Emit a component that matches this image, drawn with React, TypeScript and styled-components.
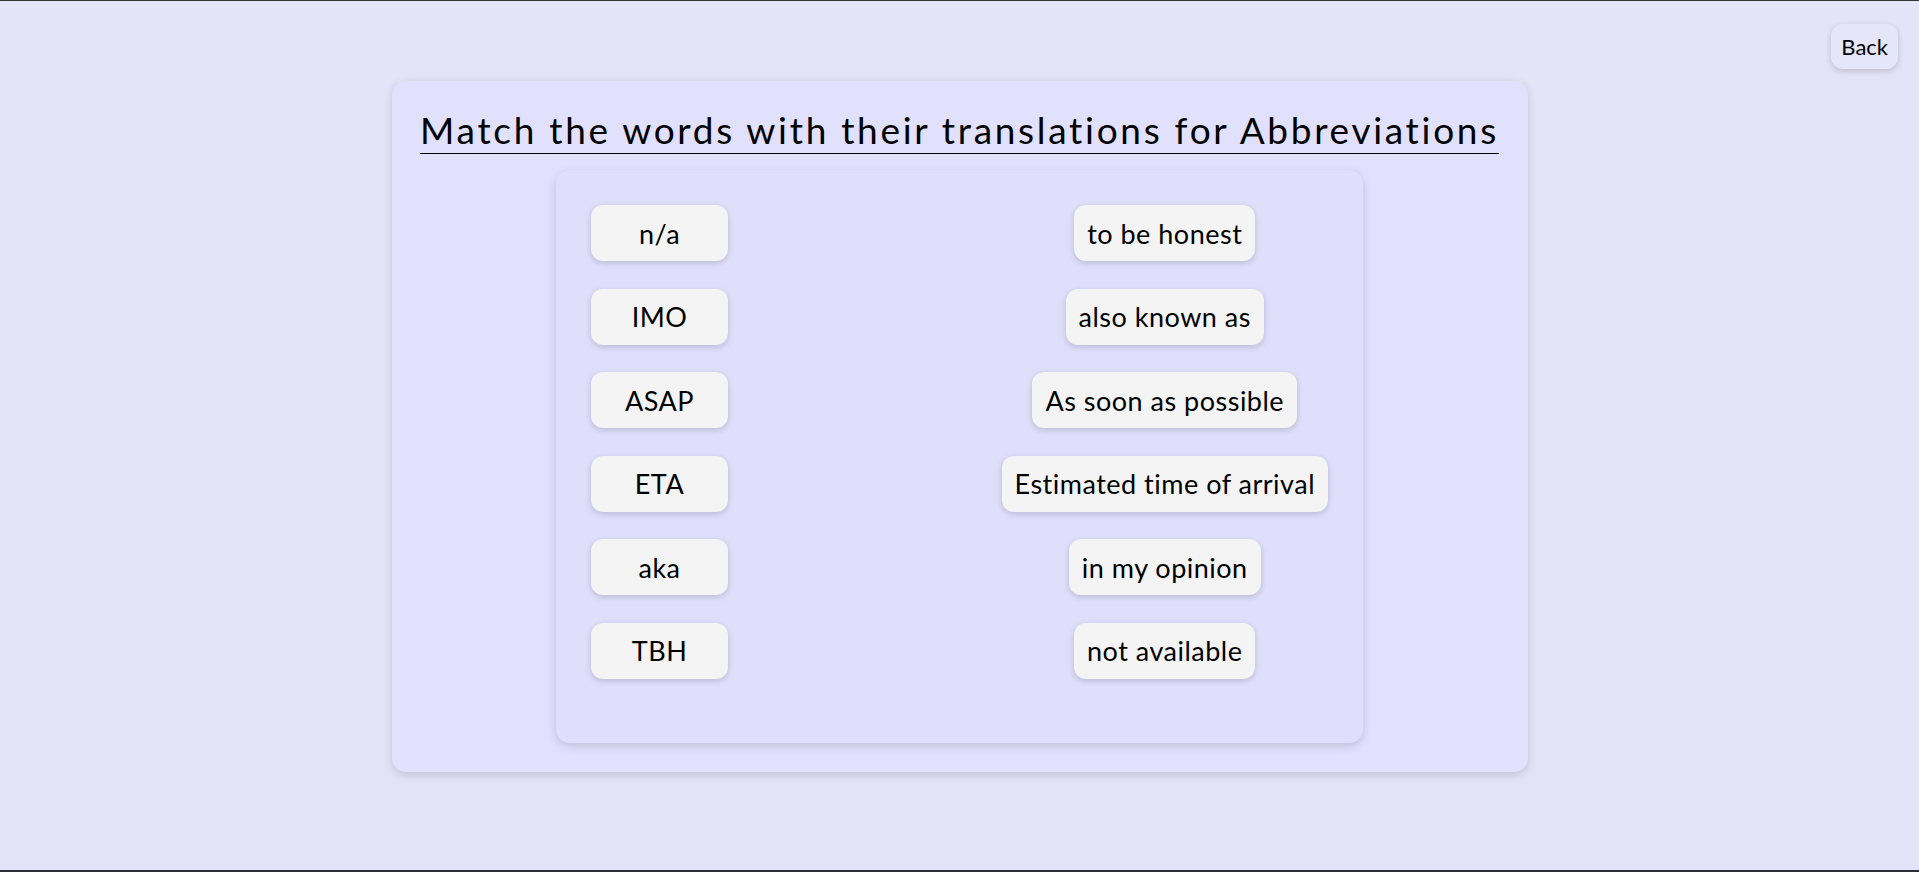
import React from "react";
import styled, { createGlobalStyle } from "styled-components";

const Global = createGlobalStyle`
  html, body { margin: 0; padding: 0; }
  body {
    background: #e4e4f8;
    font-family: "Trebuchet MS", "Lato", "Open Sans", sans-serif;
    color: #000;
  }
  * { box-sizing: border-box; }
`;

const Page = styled.div`
  height: 872px;
  border-top: 1px solid #343434;
  border-bottom: 2px solid #2b303c;
  background: #e4e4f8;
  display: flex;
  flex-direction: column;
  overflow: hidden;
`;

const TopBar = styled.div`
  display: flex;
  justify-content: flex-end;
  padding: 23px 21px 0 0;
`;

const BackButton = styled.button`
  font-family: inherit;
  font-size: 22px;
  height: 45px;
  padding: 0 10px;
  border: none;
  border-radius: 12px;
  background: #e6e6fa;
  box-shadow: 0 2px 6px rgba(0, 0, 0, 0.18);
  color: #000;
  cursor: pointer;
`;

const Card = styled.div`
  align-self: center;
  margin-top: 12px;
  width: 1136px;
  height: 691px;
  background: #e1e1fd;
  border-radius: 14px;
  box-shadow: 0 3px 10px rgba(0, 0, 0, 0.15);
  display: flex;
  flex-direction: column;
  align-items: center;
  padding: 27px 28px 29px;
`;

const Title = styled.h1`
  margin: 0 0 18px;
  font-weight: normal;
  font-size: 37px;
  line-height: 44px;
  letter-spacing: 2.7px;
  text-decoration: underline;
  text-decoration-thickness: 1px;
  text-underline-offset: 9px;
  white-space: nowrap;
`;

const Panel = styled.div`
  width: 807px;
  height: 573px;
  background: #dfdefb;
  border-radius: 14px;
  box-shadow: 0 3px 10px rgba(0, 0, 0, 0.15);
  padding: 35px;
  display: flex;
  justify-content: space-between;
  align-items: flex-start;
`;

const Column = styled.div`
  display: flex;
  flex-direction: column;
  align-items: center;
  gap: 27.6px;
`;

const Tile = styled.button<{ $fixed?: boolean }>`
  font-family: inherit;
  font-size: 27px;
  letter-spacing: 0.5px;
  height: 56px;
  min-width: ${(p) => (p.$fixed ? "137px" : "0")};
  padding: 0 13px;
  border: none;
  border-radius: 12px;
  background: #f4f4f4;
  color: #000;
  box-shadow: 0 2px 6px rgba(0, 0, 0, 0.16);
  cursor: pointer;
  white-space: nowrap;
`;

const words = ["n/a", "IMO", "ASAP", "ETA", "aka", "TBH"];
const translations = [
  "to be honest",
  "also known as",
  "As soon as possible",
  "Estimated time of arrival",
  "in my opinion",
  "not available",
];

export default function App() {
  return (
    <>
      <Global />
      <Page>
        <TopBar>
          <BackButton>Back</BackButton>
        </TopBar>
        <Card>
          <Title>Match the words with their translations for Abbreviations</Title>
          <Panel>
            <Column>
              {words.map((w) => (
                <Tile key={w} $fixed>
                  {w}
                </Tile>
              ))}
            </Column>
            <Column>
              {translations.map((t) => (
                <Tile key={t}>{t}</Tile>
              ))}
            </Column>
          </Panel>
        </Card>
      </Page>
    </>
  );
}
